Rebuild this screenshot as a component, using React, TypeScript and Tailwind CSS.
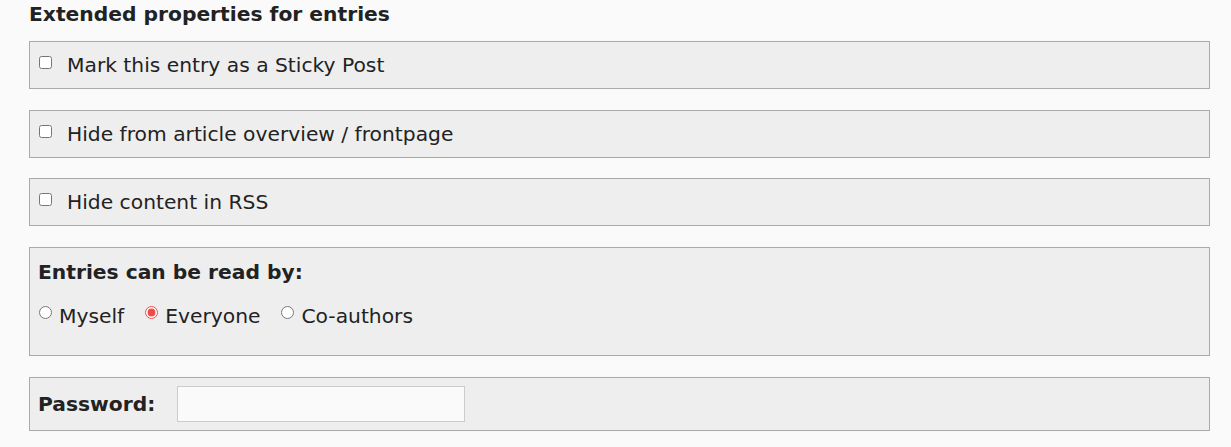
import React, { useState } from 'react';

const font = { fontFamily: '"DejaVu Sans", "Liberation Sans", sans-serif' };

const CheckRow: React.FC<{ label: string }> = ({ label }) => (
  <label className="flex items-start border border-[#aaaaaa] bg-[#eeeeee] px-[9px] py-[9px]">
    <input type="checkbox" className="mt-[5px] size-[13px] shrink-0" />
    <span className="ml-[15px] text-[20.25px] leading-[28px] text-[#222222]">{label}</span>
  </label>
);

export default function App() {
  const [readBy, setReadBy] = useState('everyone');

  const options = [
    { id: 'myself', label: 'Myself' },
    { id: 'everyone', label: 'Everyone' },
    { id: 'coauthors', label: 'Co-authors' },
  ];

  return (
    <div className="min-h-[447px] bg-[#fafafa] pl-[29px] pr-[21px] text-[#222222]" style={font}>
      {/* Section title */}
      <h3 className="text-[20.25px] font-bold leading-[28px]">Extended properties for entries</h3>

      <div className="mt-[13px] flex flex-col gap-[20.67px]">
        <CheckRow label="Mark this entry as a Sticky Post" />
        <CheckRow label="Hide from article overview / frontpage" />
        <CheckRow label="Hide content in RSS" />

        {/* Read permissions */}
        <fieldset className="border border-[#aaaaaa] bg-[#eeeeee] pl-[8px] pr-[9px] pt-[10px] pb-[25.5px]">
          <div className="text-[20.25px] font-bold leading-[28px]">Entries can be read by:</div>
          <div className="mt-[16px] flex items-start pl-px text-[20.25px] leading-[28px]">
            {options.map((opt) => (
              <label key={opt.id} className="mr-[21px] flex items-start">
                <input
                  type="radio"
                  name="readBy"
                  checked={readBy === opt.id}
                  onChange={() => setReadBy(opt.id)}
                  className="mt-[4px] size-[13px] shrink-0 accent-[#f04a4a]"
                />
                <span className="ml-[7px]">{opt.label}</span>
              </label>
            ))}
          </div>
        </fieldset>

        {/* Password */}
        <div className="flex items-center border border-[#aaaaaa] bg-[#eeeeee] pl-[8px] pr-[9px] py-[8px]">
          <label className="text-[20.25px] font-bold leading-[28px]">Password:</label>
          <input
            type="password"
            className="ml-[22px] h-[36px] w-[288px] border border-[#cccccc] bg-[#fafafa] px-2 outline-none"
          />
        </div>
      </div>
    </div>
  );
}
